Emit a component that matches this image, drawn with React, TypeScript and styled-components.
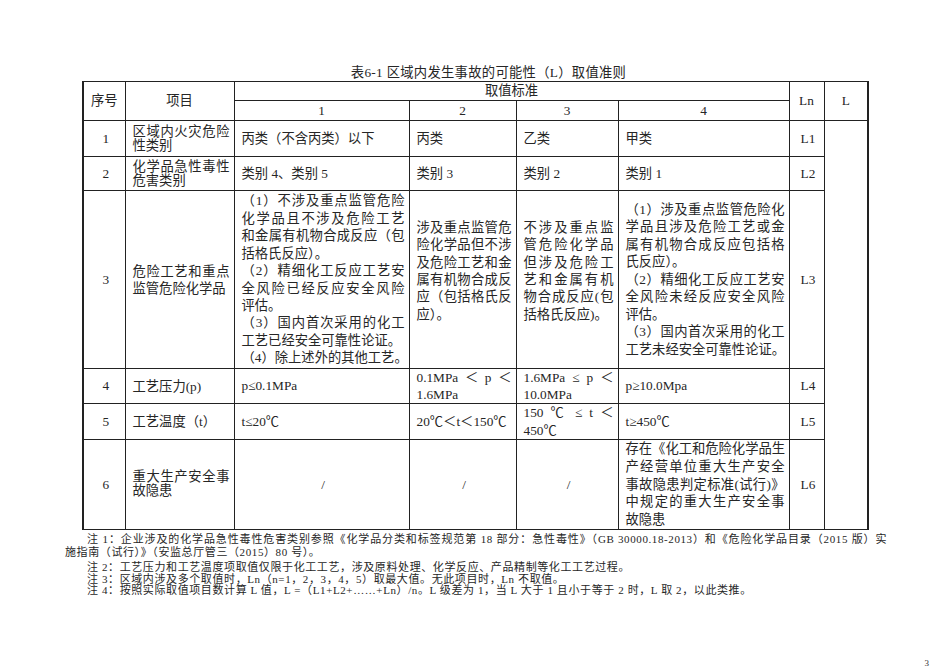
import styled, { createGlobalStyle, css } from "styled-components";

type Para = string[];

interface ValueCell {
  paras: Para[];
  center?: boolean;
  lh?: number;
  pb?: number;
}

interface RowData {
  no: string;
  height: number;
  item: Para[];
  itemLh?: number;
  values: ValueCell[];
  ln: string;
}

const one = (...lines: string[]): ValueCell => ({ paras: [lines] });

const rows: RowData[] = [
  {
    no: "1",
    height: 36,
    item: [["区域内火灾危险", "性类别"]],
    itemLh: 14,
    values: [one("丙类（不含丙类）以下"), one("丙类"), one("乙类"), one("甲类")],
    ln: "L1",
  },
  {
    no: "2",
    height: 34,
    item: [["化学品急性毒性", "危害类别"]],
    itemLh: 14,
    values: [one("类别 4、类别 5"), one("类别 3"), one("类别 2"), one("类别 1")],
    ln: "L2",
  },
  {
    no: "3",
    height: 178,
    item: [["危险工艺和重点", "监管危险化学品"]],
    itemLh: 17,
    values: [
      {
        lh: 17.4,
        paras: [
          ["（1）不涉及重点监管危险", "化学品且不涉及危险工艺", "和金属有机物合成反应（包", "括格氏反应）。"],
          ["（2）精细化工反应工艺安", "全风险已经反应安全风险", "评估。"],
          ["（3）国内首次采用的化工", "工艺已经安全可靠性论证。"],
          ["（4）除上述外的其他工艺。"],
        ],
      },
      {
        lh: 17.3,
        pb: 17,
        paras: [["涉及重点监管危", "险化学品但不涉", "及危险工艺和金", "属有机物合成反", "应（包括格氏反", "应）。"]],
      },
      {
        lh: 17.3,
        pb: 17,
        paras: [["不涉及重点监", "管危险化学品", "但涉及危险工", "艺和金属有机", "物合成反应(包", "括格氏反应)。"]],
      },
      {
        lh: 17.5,
        paras: [
          ["（1）涉及重点监管危险化", "学品且涉及危险工艺或金", "属有机物合成反应包括格", "氏反应）。"],
          ["（2）精细化工反应工艺安", "全风险未经反应安全风险", "评估。"],
          ["（3）国内首次采用的化工", "工艺未经安全可靠性论证。"],
        ],
      },
    ],
    ln: "L3",
  },
  {
    no: "4",
    height: 35,
    item: [["工艺压力(p)"]],
    values: [
      one("p≤0.1MPa"),
      { lh: 17, paras: [["0.1MPa ＜ p ＜", "1.6MPa"]] },
      { lh: 17, paras: [["1.6MPa ≤ p ＜", "10.0MPa"]] },
      one("p≥10.0Mpa"),
    ],
    ln: "L4",
  },
  {
    no: "5",
    height: 35,
    item: [["工艺温度（t）"]],
    values: [
      one("t≤20℃"),
      one("20℃＜t＜150℃"),
      { lh: 17.5, paras: [["150 ℃ ≤ t ＜", "450℃"]] },
      one("t≥450℃"),
    ],
    ln: "L5",
  },
  {
    no: "6",
    height: 89,
    item: [["重大生产安全事", "故隐患"]],
    itemLh: 14,
    values: [
      { center: true, paras: [["/"]] },
      { center: true, paras: [["/"]] },
      { center: true, paras: [["/"]] },
      {
        lh: 17.8,
        paras: [["存在《化工和危险化学品生", "产经营单位重大生产安全", "事故隐患判定标准(试行)》", "中规定的重大生产安全事", "故隐患"]],
      },
    ],
    ln: "L6",
  },
];

const colWidths = [42, 109, 175, 107, 102, 171, 35, 44];

const GlobalStyle = createGlobalStyle`
  html, body {
    margin: 0;
    padding: 0;
    background: #ffffff;
  }
  body {
    font-family: "Liberation Serif", "Noto Sans CJK SC", serif;
    color: #262626;
  }
`;

const Page = styled.div`
  width: 950px;
  height: 672px;
  box-sizing: border-box;
  padding-top: 65px;
  display: flex;
  flex-direction: column;
`;

const Title = styled.div`
  font-size: 13.3px;
  line-height: 16px;
  text-align: center;
  padding-left: 27px;
  letter-spacing: 0.3px;
`;

const Table = styled.table`
  margin-left: 82px;
  width: 785px;
  border-collapse: collapse;
  table-layout: fixed;
  font-size: 13.3px;
  border-left: 2px solid #222;
  border-right: 2px solid #222;
`;

const Col = styled.col<{ $w: number }>`
  width: ${(p) => p.$w}px;
`;

const TRow = styled.tr<{ $h: number }>`
  height: ${(p) => p.$h}px;
`;

const Head = styled.th`
  border: 1px solid #222;
  padding: 0;
  font-weight: normal;
  text-align: center;
  line-height: 16px;
`;

const Cell = styled.td<{ $center?: boolean; $lh?: number; $pb?: number }>`
  border: 1px solid #222;
  padding: 0 4px ${(p) => p.$pb ?? 0}px 7px;
  text-align: ${(p) => (p.$center ? "center" : "left")};
  line-height: ${(p) => p.$lh ?? 17.4}px;
  vertical-align: middle;
  overflow: visible;
`;

const Line = styled.span<{ $j?: boolean }>`
  display: block;
  white-space: nowrap;

  ${(p) =>
    p.$j &&
    css`
      text-align: justify;
      text-align-last: justify;
    `}
`;

const Notes = styled.div`
  margin-top: 3px;
  margin-left: 65px;
  width: 822px;
  font-size: 11px;
  letter-spacing: 0.6px;
`;

const Note = styled.div<{ $lh?: number; $gap?: number }>`
  line-height: ${(p) => p.$lh ?? 11.6}px;
  margin-bottom: ${(p) => p.$gap ?? 0}px;
`;

const NoteLine = styled.div<{ $first?: boolean; $j?: boolean }>`
  white-space: nowrap;
  text-indent: ${(p) => (p.$first ? 22 : 0)}px;

  ${(p) =>
    p.$j &&
    css`
      text-align: justify;
      text-align-last: justify;
    `}
`;

const PageNo = styled.div`
  margin-top: auto;
  padding: 0 21px 4px 0;
  text-align: right;
  font-size: 9px;
  line-height: 10px;
  color: #333;
`;

function Paras({ paras }: { paras: Para[] }) {
  return (
    <>
      {paras.map((p, pi) =>
        p.map((line, li) => (
          <Line key={`${pi}-${li}`} $j={li < p.length - 1}>
            {line}
          </Line>
        ))
      )}
    </>
  );
}

export default function App() {
  return (
    <Page>
      <GlobalStyle />
      <Title>表6-1 区域内发生事故的可能性（L）取值准则</Title>
      <Table>
        <colgroup>
          {colWidths.map((w, i) => (
            <Col key={i} $w={w} />
          ))}
        </colgroup>
        <thead>
          <TRow $h={19}>
            <Head rowSpan={2}>序号</Head>
            <Head rowSpan={2}>项目</Head>
            <Head colSpan={4}>取值标准</Head>
            <Head rowSpan={2}>Ln</Head>
            <Head rowSpan={2}>L</Head>
          </TRow>
          <TRow $h={20}>
            <Head>1</Head>
            <Head>2</Head>
            <Head>3</Head>
            <Head>4</Head>
          </TRow>
        </thead>
        <tbody>
          {rows.map((r, i) => (
            <TRow key={r.no} $h={r.height}>
              <Cell $center>{r.no}</Cell>
              <Cell $lh={r.itemLh ?? 17}>
                <Paras paras={r.item} />
              </Cell>
              {r.values.map((c, k) => (
                <Cell key={k} $center={c.center} $lh={c.lh} $pb={c.pb}>
                  <Paras paras={c.paras} />
                </Cell>
              ))}
              <Cell $center>{r.ln}</Cell>
              {i === 0 && <Cell rowSpan={rows.length} />}
            </TRow>
          ))}
        </tbody>
      </Table>
      <Notes>
        <Note $lh={12.8} $gap={3.5}>
          <NoteLine $first $j>
            注 1：企业涉及的化学品急性毒性危害类别参照《化学品分类和标签规范第 18 部分：急性毒性》（GB 30000.18-2013）和《危险化学品目录（2015 版）实
          </NoteLine>
          <NoteLine>施指南（试行）》（安监总厅管三（2015）80 号）。</NoteLine>
        </Note>
        <Note>
          <NoteLine $first>注 2：工艺压力和工艺温度项取值仅限于化工工艺，涉及原料处理、化学反应、产品精制等化工工艺过程。</NoteLine>
        </Note>
        <Note>
          <NoteLine $first>注 3：区域内涉及多个取值时，Ln（n=1，2，3，4，5）取最大值。无此项目时，Ln 不取值。</NoteLine>
        </Note>
        <Note>
          <NoteLine $first>
            注 4：按照实际取值项目数计算 L 值，L =（L1+L2+……+Ln）/n。L 级差为 1，当 L 大于 1 且小于等于 2 时，L 取 2，以此类推。
          </NoteLine>
        </Note>
      </Notes>
      <PageNo>3</PageNo>
    </Page>
  );
}
